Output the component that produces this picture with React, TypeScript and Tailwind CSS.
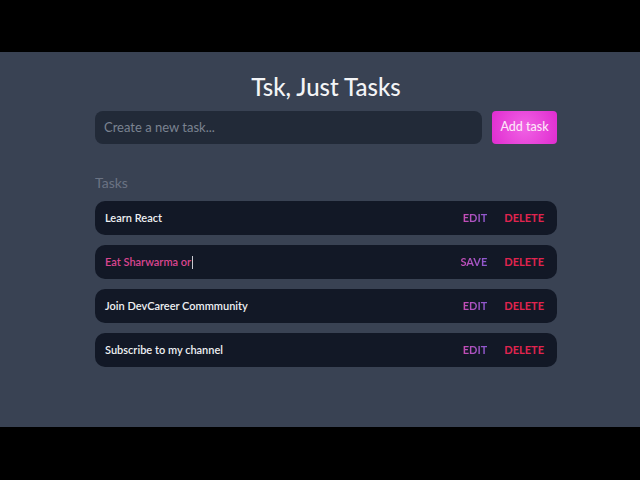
import React from "react";

const tasks = [
  { text: "Learn React", editing: false },
  { text: "Eat Sharwarma or", editing: true },
  { text: "Join DevCareer Commmunity", editing: false },
  { text: "Subscribe to my channel", editing: false },
];

export default function App() {
  return (
    <div className="w-[640px] h-[480px] bg-black flex flex-col" style={{ fontFamily: "Lato, 'Noto Sans', sans-serif" }}>
      <div className="h-[52px] bg-black" />
      <div className="h-[375px] bg-[#394253] flex flex-col items-center pt-[19px] pl-[12px]">
        <h1 className="text-[24px] leading-[32px] font-medium text-[#f3f4f6]">Tsk, Just Tasks</h1>
        <div className="w-[462px] mt-[8px] flex gap-[10px]">
          <div className="flex-1 h-[33px] rounded-lg bg-[#222a38] flex items-center px-[9px]">
            <span className="text-[13px] text-[#7b8391]">Create a new task...</span>
          </div>
          <button className="w-[65px] h-[33px] rounded-[4px] bg-[radial-gradient(circle,#f062e4,#e02cd0)] text-[12.5px] font-medium text-[#fde7f8]">
            Add task
          </button>
        </div>
        <div className="w-[462px] mt-[29px] text-[14px] leading-[20px] text-[#6b7383]">Tasks</div>
        <div className="w-[462px] mt-[8px] flex flex-col gap-[10px]">
          {tasks.map((t) => (
            <div key={t.text} className="h-[34px] rounded-[10px] bg-[#121826] flex items-center pl-[10px] pr-[13px]">
              {t.editing ? (
                <span className="flex-1 text-[11px] font-semibold text-[#d9458f] flex items-center">
                  {t.text}
                  <span className="inline-block w-px h-[13px] bg-[#c9c9d0] ml-[1px]" />
                </span>
              ) : (
                <span className="flex-1 text-[11px] font-semibold text-[#eef0f3]">{t.text}</span>
              )}
              <span className="text-[11px] font-bold bg-gradient-to-r from-[#c74bb4] to-[#8a58d0] bg-clip-text text-transparent">
                {t.editing ? "SAVE" : "EDIT"}
              </span>
              <span className="ml-[17px] text-[11px] font-bold text-[#e0244f]">DELETE</span>
            </div>
          ))}
        </div>
      </div>
      <div className="flex-1 bg-black" />
    </div>
  );
}
